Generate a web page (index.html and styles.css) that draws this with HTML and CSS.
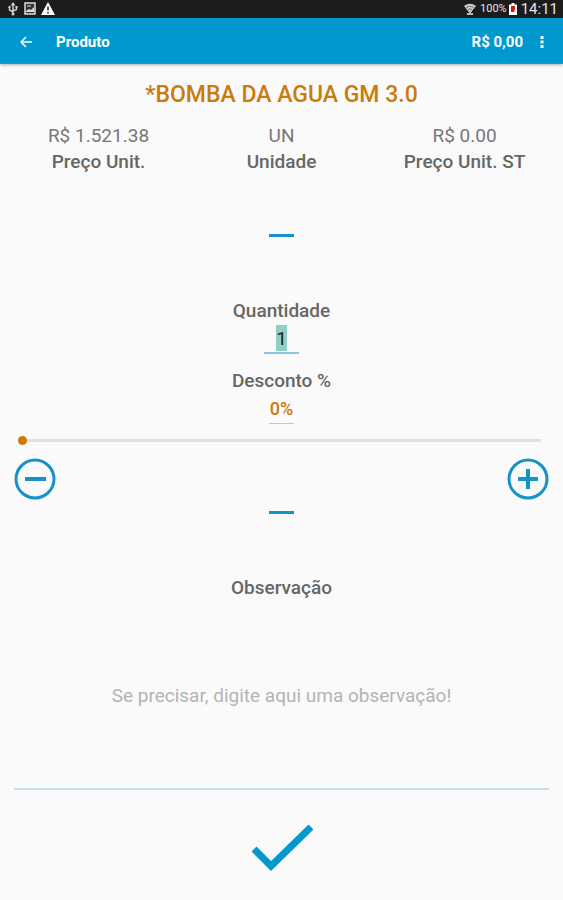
FILE: index.html
```html
<!DOCTYPE html>
<html lang="pt-BR">
<head>
<meta charset="UTF-8">
<meta name="viewport" content="width=device-width, initial-scale=1.0">
<title>Produto</title>
<link rel="stylesheet" href="styles.css">
</head>
<body>

<div class="status-bar">
    <div class="status-group status-left">
        <svg width="12" height="14" viewBox="0 0 12 14" fill="none" stroke="#ccc" stroke-width="1.5">
            <path d="M6 2v10M2.5 5v3L6 10M9.500 4.500v3L6 9"/>
            <path d="M6 0l2.500 3.500h-5zM1.500 4h2v2h-2zM8.500 4h2v2h-2z" fill="#ccc" stroke="none"/>
            <circle cx="6" cy="12" r="1.500" fill="#ccc" stroke="none"/>
        </svg>
        <svg width="12" height="14" viewBox="0 0 12 14">
            <rect x="1" y="1" width="10" height="11" fill="#333" stroke="#ddd" stroke-width="1.500"/>
            <path d="M2 9l3-2 2 1 3-3v5H2z" fill="#ddd"/>
            <path d="M3 4h4" stroke="#ddd"/>
        </svg>
        <svg width="14" height="14" viewBox="0 0 14 14">
            <path d="M7 0l7 13H0z" fill="#fff"/>
            <path d="M7 4.500v4M7 10v1.500" stroke="#1c1c1c" stroke-width="1.500"/>
        </svg>
    </div>
    <div class="status-group">
        <svg width="12" height="12" viewBox="0 0 12 12">
            <path d="M0 3Q6-1.500 12 3L8 8H4z" fill="#ccc"/>
            <path d="M2 4.500Q6 2 10 4.500M4 6.500Q6 5 8 6.500" fill="none" stroke="#555" stroke-width=".7"/>
            <path d="M4 7h4v2H7v1h2v2H3v-2h2V9H4z" fill="#bbb"/>
        </svg>
        <span class="battery-text">100%</span>
        <svg width="8" height="12" viewBox="0 0 8 12">
            <path d="M2.500 0h3v1.500H8V12H0V1.500h2.500z" fill="#fff"/>
            <path d="M2 3h4v3L5 9H2z" fill="#d01818"/>
        </svg>
        <span class="clock">14:11</span>
    </div>
</div>

<header class="toolbar">
    <button class="icon-button" type="button" aria-label="Voltar">
        <svg width="12" height="12" viewBox="0 0 12 12" fill="none" stroke="#fff" stroke-width="1.500">
            <path d="M12 6H1M6 1L1 6l5 5"/>
        </svg>
    </button>
    <h1>Produto</h1>
    <span class="total">R$ 0,00</span>
    <button class="icon-button" type="button" aria-label="Mais opções">
        <svg width="4" height="12" viewBox="0 0 4 12" fill="#fff">
            <path d="M.5 0h3v3h-3zM.5 4.500h3v3h-3zM.5 9h3v3h-3z"/>
        </svg>
    </button>
</header>

<main class="content">
    <h2 class="product-name">*BOMBA DA AGUA GM 3.0</h2>

    <dl class="prices">
        <div><dt>Preço Unit.</dt><dd>R$ 1.521.38</dd></div>
        <div><dt>Unidade</dt><dd>UN</dd></div>
        <div><dt>Preço Unit. ST</dt><dd>R$ 0.00</dd></div>
    </dl>

    <hr class="dash dash-top">

    <form class="order">
        <label for="quantidade">Quantidade</label>
        <input class="quantity" id="quantidade" type="text" inputmode="numeric" value="1">

        <label for="desconto">Desconto %</label>
        <input class="discount" id="desconto" type="text" value="0%">

        <input class="slider" type="range" min="0" max="100" value="0" aria-label="Desconto">

        <div class="steps">
            <button class="icon-button" type="button" aria-label="Diminuir">
                <svg width="42" height="42" viewBox="0 0 42 42" fill="none" stroke="#1593c8" stroke-width="3">
                    <circle cx="21" cy="21" r="19"/>
                    <path d="M11 21h21" stroke-width="4"/>
                </svg>
            </button>
            <button class="icon-button" type="button" aria-label="Aumentar">
                <svg width="42" height="42" viewBox="0 0 42 42" fill="none" stroke="#1593c8" stroke-width="3">
                    <circle cx="21" cy="21" r="19"/>
                    <path d="M11 21h20M21 11v20" stroke-width="4"/>
                </svg>
            </button>
        </div>

        <hr class="dash dash-bottom">

        <label for="observacao">Observação</label>
        <textarea class="note" id="observacao" placeholder="Se precisar, digite aqui uma observação!"></textarea>

        <button class="icon-button confirm" type="submit" aria-label="Confirmar">
            <svg width="62" height="48" viewBox="0 0 62 48" fill="none" stroke="#0399ce" stroke-width="7">
                <path d="M3 25l17 17L60 3"/>
            </svg>
        </button>
    </form>
</main>

</body>
</html>
```
FILE: styles.css
```css
* {
    box-sizing: border-box;
}
body {
    margin: 0;
    font-family: Roboto, "Liberation Sans", sans-serif;
    font-size: 19px;
    line-height: 26px;
    color: #666;
    background-color: #fafafa;
}
svg {
    display: block;
}
.status-bar {
    display: flex;
    justify-content: space-between;
    height: 18px;
    padding: 0 5px 0 7px;
    background-color: #1c1c1c;
    color: #e4e4e4;
    line-height: 18px;
}
.status-group {
    display: flex;
    align-items: center;
    gap: 4px;
}
.status-left {
    gap: 5px;
}
.battery-text {
    margin-right: -2px;
    font-size: 11px;
}
.clock {
    font-size: 15px;
}
.toolbar {
    display: flex;
    align-items: center;
    height: 46px;
    padding: 2px 19px 0 20px;
    background-color: #0099cf;
    color: #fff;
    border-bottom: 1px solid #3c8cab;
    box-shadow: 0 1px 3px rgba(0, 0, 0, 0.3);
}
.toolbar h1 {
    margin: 0 auto 0 24px;
    font-size: 15px;
    font-weight: 700;
}
.total {
    margin-right: 17px;
    font-size: 15px;
    font-weight: 700;
}
.icon-button {
    padding: 0;
    border: none;
    background: none;
    cursor: pointer;
}
.content {
    padding: 17px 14px;
    text-align: center;
}
.product-name {
    margin: 0 0 14px;
    font-size: 23px;
    font-weight: 500;
    line-height: 28px;
    color: #cc7a0c;
}
.prices {
    display: grid;
    grid-template-columns: repeat(3, 1fr);
    margin: 0 -7px;
}
.prices div {
    display: flex;
    flex-direction: column-reverse;
}
.prices dt {
    font-weight: 500;
}
.prices dd {
    margin: 0;
    color: #777;
}
.dash {
    width: 25px;
    height: 3px;
    border: none;
    background-color: #1593c8;
}
.dash-top {
    margin: 59px auto 61px;
}
.dash-bottom {
    margin: 11px auto 61px;
}
.order {
    display: flex;
    flex-direction: column;
    align-items: center;
}
.order label {
    font-weight: 500;
}
.order input,
.order textarea {
    padding: 0;
    border: none;
    border-radius: 0;
    outline: none;
    background-color: transparent;
    font-family: inherit;
    font-size: 19px;
    text-align: center;
}
.order .quantity {
    width: 35px;
    height: 30px;
    margin-bottom: 14px;
    border-bottom: 2px solid #8fc1e0;
    background: linear-gradient(#8fd0c4, #8fd0c4) center 1px / 11px 26px no-repeat;
    color: #222;
}
.order .discount {
    width: 25px;
    height: 30px;
    border-bottom: 1px solid #a9cfe8;
    font-size: 18px;
    font-weight: 500;
    color: #cc7a0c;
}
.order .slider {
    appearance: none;
    width: calc(100% - 12px);
    height: 9px;
    margin: 12px 8px 13px 4px;
    background: linear-gradient(#e0e0e0, #e0e0e0) center / 100% 3px no-repeat;
}
.slider::-webkit-slider-thumb {
    appearance: none;
    width: 9px;
    height: 9px;
    border-radius: 50%;
    background-color: #cc7a0c;
}
.steps {
    display: flex;
    justify-content: space-between;
    width: 100%;
}
.order .note {
    width: 100%;
    height: 189px;
    padding-top: 82px;
    border-bottom: 2px solid #c4dfe9;
    line-height: 26px;
    resize: none;
}
.note::placeholder {
    color: #b4b4b4;
}
.confirm {
    margin-top: 34px;
}
```
